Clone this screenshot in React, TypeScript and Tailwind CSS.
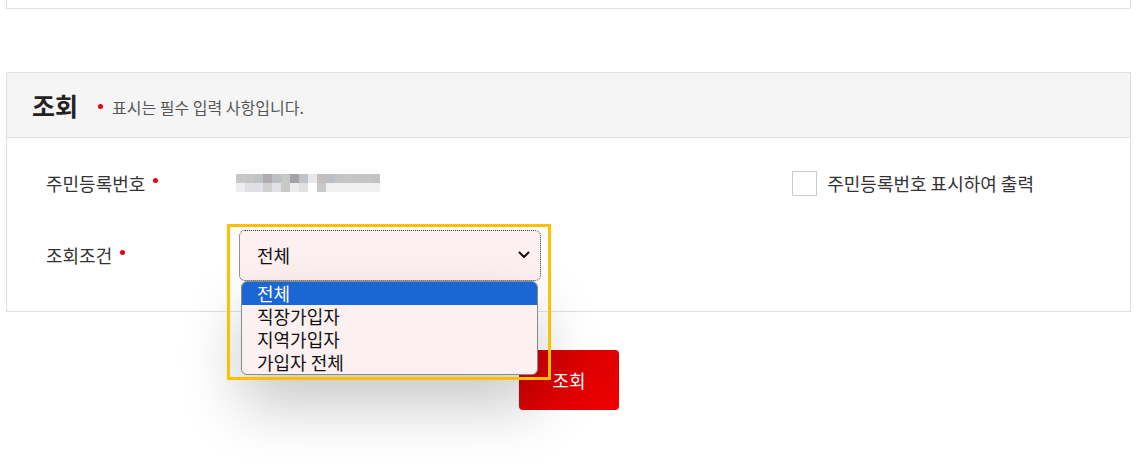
import React from "react";

const FONT = { fontFamily: '"Noto Sans CJK KR", "Noto Sans", sans-serif' };

const pixelRows = [
  ["#c8c8c8", "#c6c6c6", "#c0c4c6", "#b0acb0", "#bcc0c4", "#c8c8c8", "#a4a2a8", "#c0c4c8", "#e8e8ec", "#c4c0c0", "#bcc0c4", "#c4c4c4", "#c6c6c6", "#c4c4c4", "#c8c4c4", "#c0c4c4"],
  ["#eeeeee", "#e0e0e4", "#e0e0e4", "#d0d0d0", "#e0e0e8", "#c8c8c8", "#ececec", "#e0e0e4", "#ffffff", "#c8c8c8", "#f0f0f0", "#f0f0f0", "#f0f0f0", "#f0f0f0", "#f0f0f0", "#f0f0f0"],
];

const options = ["전체", "직장가입자", "지역가입자", "가입자 전체"];

function RedDot() {
  return <span className="inline-block w-[5px] h-[5px] rounded-full bg-[#e60012] -translate-y-[3px]" />;
}

function MaskedValue() {
  return (
    <div className="flex flex-col">
      {pixelRows.map((row, r) => (
        <div key={r} className="flex">
          {row.map((c, i) => (
            <span key={i} className="w-[9px] h-[9px]" style={{ backgroundColor: c }} />
          ))}
        </div>
      ))}
    </div>
  );
}

export default function App() {
  return (
    <div className="w-[1137px] h-[472px] bg-white overflow-hidden text-[#333]" style={FONT}>
      <div className="mx-[6px] h-[9px] border-x border-b border-[#e0e0e0]" />

      <div className="mx-[6px] mt-[63px]">
        <div className="h-[66px] bg-[#f5f5f5] border border-[#e0e0e0] flex items-center pl-[25px] gap-[20px]">
          <span className="text-[25px] font-bold text-[#222] leading-none">조회</span>
          <span className="flex items-center gap-[9px] text-[16px] text-[#555] mt-[3px]">
            <span className="inline-block w-[5px] h-[5px] rounded-full bg-[#e60012]" />
            표시는 필수 입력 사항입니다.
          </span>
        </div>

        <div className="border-x border-b border-[#e0e0e0] pl-[39px] pt-[20px] pb-[31px] flex flex-col gap-[22px]">
          <div className="h-[50px] flex items-center">
            <div className="w-[190px] flex items-center gap-[8px] text-[18px]">
              주민등록번호 <RedDot />
            </div>
            <MaskedValue />
            <div className="ml-auto mr-[96px] flex items-center gap-[10px] text-[18px]">
              <span className="w-[25px] h-[25px] border border-[#cccccc] bg-white" />
              주민등록번호 표시하여 출력
            </div>
          </div>

          <div className="h-[50px] flex items-center">
            <div className="w-[193px] flex items-center gap-[8px] text-[18px]">
              조회조건 <RedDot />
            </div>
            <div className="relative z-10">
              <div className="w-[302px] h-[51px] rounded-[6px] bg-[#fdf0f0] border border-dotted border-[#333] flex items-center justify-between pl-[17px] pr-[10px] text-[18px] text-[#111]">
                전체
                <svg width="12" height="8" viewBox="0 0 12 8" fill="none">
                  <path d="M1.5 1.5 6 6l4.5-4.5" stroke="#111" strokeWidth="2" strokeLinecap="round" strokeLinejoin="round" />
                </svg>
              </div>
              <div className="absolute left-[2px] top-[51px] w-[297px] rounded-[6px] bg-[#fdf0f0] border border-[#8a8a8a] overflow-hidden shadow-[0_30px_60px_rgba(0,0,0,0.22)] text-[18px] text-[#111]">
                {options.map((o, i) => (
                  <div
                    key={o}
                    className={`h-[23px] leading-[23px] pl-[15px] ${i === 0 ? "bg-[#1a66d2] text-white" : ""}`}
                  >
                    {o}
                  </div>
                ))}
              </div>
              <div className="absolute -left-[12px] -top-[6px] w-[324px] h-[156px] border-[3px] border-[#ffc000] pointer-events-none" />
            </div>
          </div>
        </div>
      </div>

      <div className="flex justify-center mt-[38px] pl-[1px]">
        <button className="w-[100px] h-[60px] rounded-[4px] bg-gradient-to-br from-[#cf0000] to-[#f00000] text-white text-[18px]">
          조회
        </button>
      </div>
    </div>
  );
}
